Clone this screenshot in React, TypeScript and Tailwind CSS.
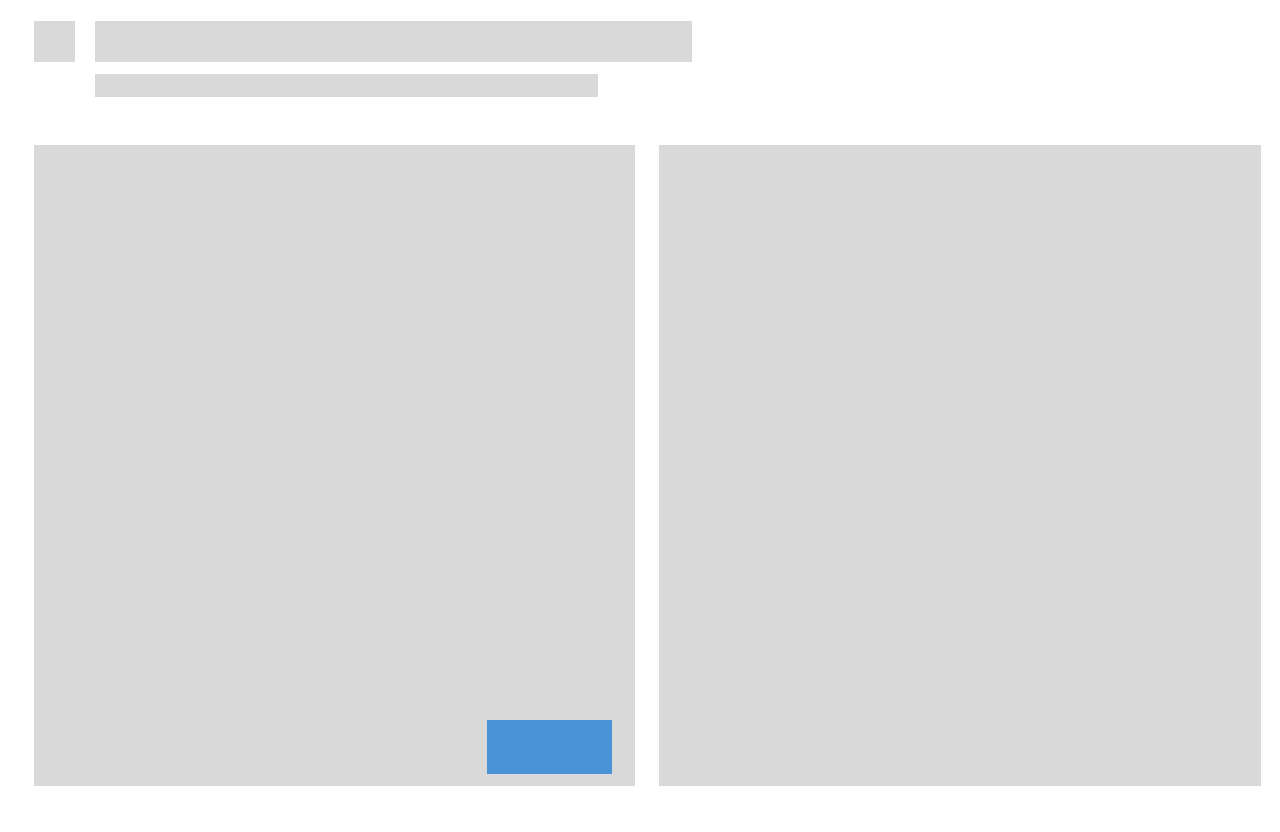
export default function App() {
  return (
    <div className="min-h-screen bg-white pl-[34px] pt-[21px]">
      <div className="flex items-start gap-[20px]">
        <div className="h-[41px] w-[41px] bg-[#d9d9d9]" />
        <div className="flex flex-col">
          <div className="h-[41px] w-[597px] bg-[#d9d9d9]" />
          <div className="mt-[12px] h-[23px] w-[503px] bg-[#d9d9d9]" />
        </div>
      </div>

      <div className="mt-[48px] flex gap-[24px]">
        <div className="flex h-[641px] w-[601px] flex-col items-end justify-end bg-[#d9d9d9] pb-[12px] pr-[23px]">
          <div className="h-[54px] w-[125px] bg-[#4a93d6]" />
        </div>
        <div className="h-[641px] w-[602px] bg-[#d9d9d9]" />
      </div>
    </div>
  );
}
